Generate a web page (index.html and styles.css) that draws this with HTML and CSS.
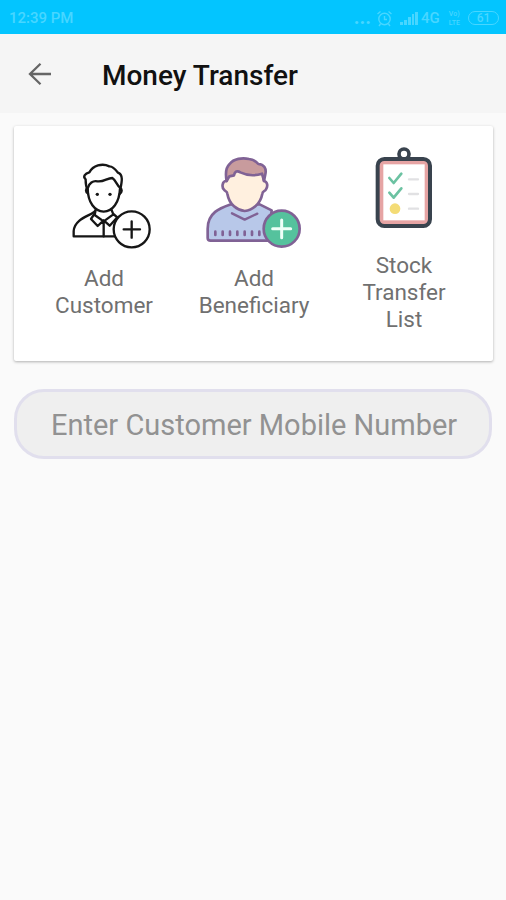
FILE: index.html
```html
<!DOCTYPE html>
<html lang="en">
<head>
    <meta charset="UTF-8">
    <meta name="viewport" content="width=device-width, initial-scale=1.0">
    <title>Money Transfer</title>
    <link rel="stylesheet" href="styles.css">
</head>
<body>
    <div class="status">
        <span class="time">12:39 PM</span>
        <div class="status-icons">
            <span class="dots">...</span>
            <svg class="alarm" width="17" height="17" viewBox="0 0 17 17">
                <circle cx="8.5" cy="9" r="5.7" />
                <path d="M8.5 6v3.5h2.5M1.5 4l3-2.5M15.5 4l-3-2.5M4.5 14l-1.500 2M12.500 14l1.500 2" />
            </svg>
            <svg class="signal" width="18" height="13" viewBox="0 0 18 13">
                <path d="M0 10h3v3H0zM4 8h3v5H4zM8 5h3v8H8zM12 2h2v11h-2zM15 0h3v13h-3z" />
            </svg>
            <span class="net">4G</span>
            <div class="volte">
                <span>Vo)</span>
                <span>LTE</span>
            </div>
            <span class="battery">61</span>
        </div>
    </div>
    <header class="toolbar">
        <svg class="back" width="24" height="24" viewBox="0 0 24 24">
            <path d="M23 12H2M12.500 1.800L2 12l10.500 10.200" />
        </svg>
        <h1>Money Transfer</h1>
    </header>
    <main>
        <div class="card">
            <div class="item">
                <svg class="customer" width="100" height="125" viewBox="-18 -30 300 375">
                    <path d="M104 184C96 196 44 204 41 243V259H166" />
                    <path d="M83 116C84 158 104 184 131 185C158 184 178 158 180 116" />
                    <path d="M84 130C76 126 76 116 84 113C87 100 99 91 112 94C131 97 141 84 157 84C168 91 170 105 180 113C187 118 187 127 179 132" />
                    <path d="M83 119C76 108 77 97 77 88C67 80 76 70 88 67C99 47 126 38 148 49C158 48 167 59 174 68C190 74 186 94 181 118" />
                    <path d="M107 179L104 195L131 214L160 193L154 178M104 190L93 207L113 228L131 211L149 227L172 202L160 192M131 212V259" />
                    <circle class="dot" cx="112" cy="133" r="5" />
                    <circle class="dot" cx="150" cy="133" r="5" />
                    <circle class="badge" cx="215" cy="238" r="54" />
                    <path d="M215 214V263M191 238H240" />
                </svg>
                <p>Add Customer</p>
            </div>
            <div class="item">
                <svg class="beneficiary" width="100" height="125" viewBox="27 -15 300 375">
                    <path class="shirt" d="M107 178C76 189 38 202 38 251V279Q38 287 47 287H220L230 196L194 178Z" />
                    <path class="skin" d="M94 108C81 108 80 127 87 134C90 140 96 137 97 146C103 180 127 195 149 198C172 195 196 178 202 146C203 137 209 140 213 133C219 124 218 110 207 108L202 75L100 74Z" />
                    <path class="hair" d="M95 108C91 87 94 66 104 57C116 41 142 37 162 42C175 43 184 50 190 57C207 58 215 70 211 88L207 108L201 86C180 93 155 91 136 82C127 76 119 79 117 91L103 94Z" />
                    <path class="neck" d="M111 205L149 224L187 206" />
                    <path class="marks" d="M61 260V270M83 260V270M105 260V270M127 260V270M149 260V270M171 260V270M193 260V270" />
                    <circle class="badge" cx="260" cy="251" r="54" />
                    <path class="plus" d="M260 225V278M233 251H287" />
                </svg>
                <p>Add Beneficiary</p>
            </div>
            <div class="item">
                <svg class="stock" width="100" height="112" viewBox="-18 0 300 336">
                    <circle class="ring" cx="132" cy="42" r="15" />
                    <rect class="board" x="53" y="57" width="157" height="201" rx="20" />
                    <rect class="paper" x="70" y="73" width="124" height="168" />
                    <path class="check" d="M88 114L101 129L124 101M88 158L101 173L124 145" />
                    <circle class="coin" cx="105" cy="206" r="16" />
                    <path class="lines" d="M147 118H174M147 162H174M147 206H174" />
                </svg>
                <p>Stock Transfer List</p>
            </div>
        </div>
        <form>
            <input type="tel" id="mobile" placeholder="Enter Customer Mobile Number">
        </form>
    </main>
</body>
</html>
```
FILE: styles.css
```css
* {
    padding: 0;
    margin: 0;
    box-sizing: border-box;
    font-family: Roboto, "Liberation Sans", sans-serif;
}

body {
    min-height: 100vh;
    background-color: #fafafa;
}

.status {
    height: 34px;
    padding: 2px 7px 0 9px;
    background-color: #03c5ff;
    color: #48d6ff;
    display: flex;
    align-items: center;
    justify-content: space-between;
    font-size: 15px;
    font-weight: 500;
}

.status-icons {
    display: flex;
    align-items: center;
}

.status svg {
    fill: none;
    stroke: #48d6ff;
    stroke-width: 1.4;
}

.dots {
    font-size: 20px;
    font-weight: 700;
    line-height: 16px;
    margin: -3px 5px 0 0;
}

.alarm {
    margin-right: 7px;
}

.status .signal {
    fill: #48d6ff;
    stroke: none;
    margin-right: 3px;
}

.volte {
    display: flex;
    flex-direction: column;
    gap: 1px;
    font-size: 7px;
    line-height: 8px;
    margin: 0 8px 0 9px;
}

.battery {
    width: 31px;
    height: 14px;
    border: 1px solid #48d6ff;
    border-radius: 7px;
    font-size: 12px;
    line-height: 12px;
    text-align: center;
}

.toolbar {
    height: 79px;
    padding-left: 28px;
    background-color: #f5f5f5;
    display: flex;
    align-items: center;
}

.back {
    fill: none;
    stroke: #666;
    stroke-width: 2.3;
}

.toolbar h1 {
    margin: 3px 0 0 50px;
    font-size: 28px;
    font-weight: 500;
    color: #111;
}

main {
    padding: 13px 13px 0 14px;
}

.card {
    height: 235px;
    padding: 14px 14px 0 15px;
    background-color: white;
    border-radius: 2px;
    box-shadow: 0 1px 3px rgba(0, 0, 0, 0.3);
    display: flex;
}

.item {
    width: 150px;
    padding: 0 18px;
    text-align: center;
    font-size: 22.5px;
    line-height: 27px;
    color: #707070;
}

.item svg {
    display: block;
    margin: 0 auto;
    fill: none;
    stroke-linecap: round;
    stroke-linejoin: round;
}

.customer {
    stroke: #161616;
    stroke-width: 7;
}

.customer .dot {
    fill: #161616;
    stroke: none;
}

.customer .badge {
    fill: white;
}

.beneficiary {
    stroke: #806295;
    stroke-width: 8;
}

.shirt {
    fill: #b8c8e9;
}

.skin {
    fill: #fff0df;
}

.hair {
    fill: #c89b9d;
}

.neck {
    stroke-width: 7;
}

.beneficiary .badge {
    fill: #55c29d;
}

.plus {
    stroke: #effff8;
    stroke-width: 9;
}

.ring {
    stroke: #39434e;
    stroke-width: 11;
}

.board {
    fill: #e6a4a4;
    stroke: #39434e;
    stroke-width: 12;
}

.paper {
    fill: white;
}

.check {
    stroke: #6cc2a2;
    stroke-width: 8;
}

.coin {
    fill: #f4dc76;
}

.lines {
    stroke: #e1e1e3;
    stroke-width: 7;
}

#mobile {
    display: block;
    width: 478px;
    height: 70px;
    margin-top: 28px;
    padding: 2px 24px 0 34px;
    border: 3px solid #e1dfed;
    border-radius: 30px;
    background-color: #efefef;
    outline: none;
    font-size: 29px;
    color: #555;
}

#mobile::placeholder {
    color: #929292;
}
```
